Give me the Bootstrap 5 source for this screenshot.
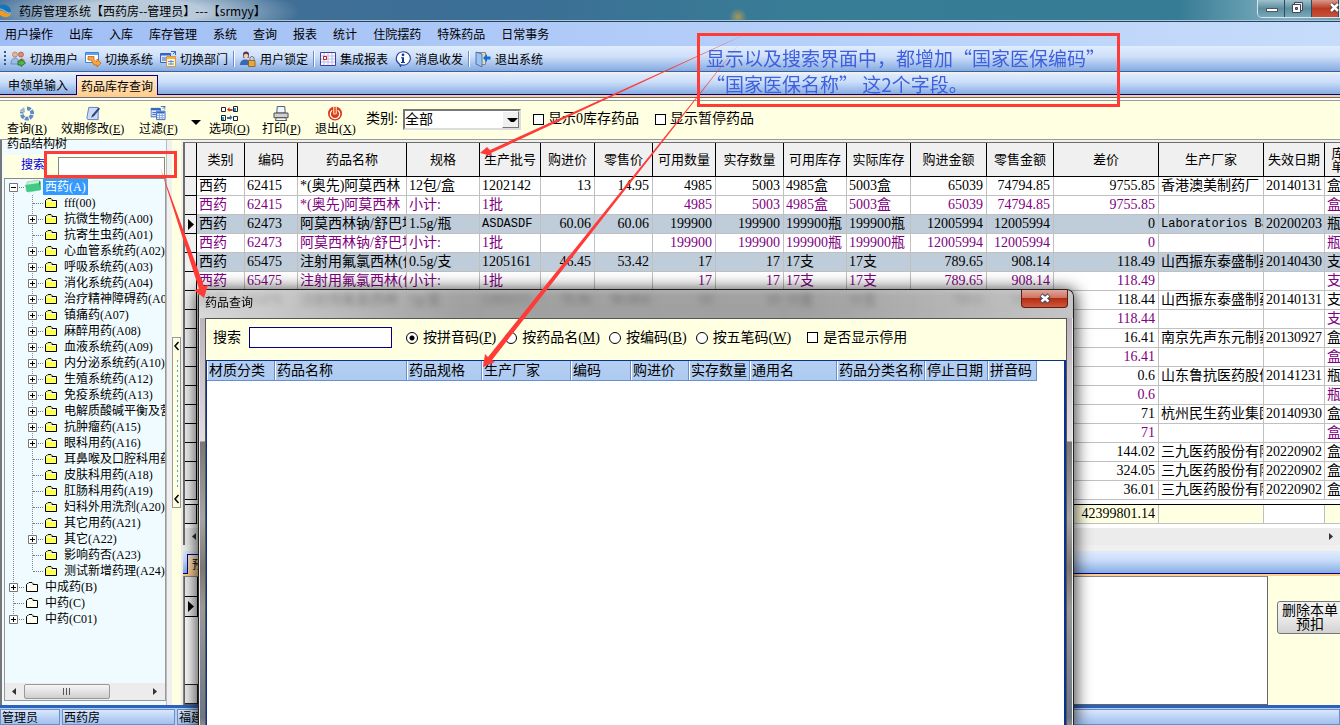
<!DOCTYPE html>
<html lang="zh-CN">
<head>
<meta charset="utf-8">
<meta name="viewport" content="width=device-width, initial-scale=1">
<title>药房管理系统</title>
<link href="https://cdn.jsdelivr.net/npm/bootstrap@5.3.0/dist/css/bootstrap.min.css" rel="stylesheet">
<style>
:root{--cream:#ffffe1;--azure:#f0fbff;--bar:linear-gradient(#e0edfd,#cfe0f9 40%,#86abe2)}
body{font-family:"Liberation Serif","Noto Sans CJK SC",sans-serif;font-size:12px;line-height:16px;color:#000;background:#f0f0f0;overflow:hidden}
button,input,select{font:inherit;color:inherit;border-radius:0}
button{background:none;border:0;padding:0}
a{color:#000;text-decoration:none}
svg{display:block;flex:none}
.ui-sans{font-family:"Noto Sans CJK SC",sans-serif}
.fs14{font-size:14px}
/* window chrome */
.titlebar{height:22px;background:radial-gradient(circle at 738px 17px,#a5995a 0,transparent 9px),radial-gradient(ellipse 160px 30px at 140px 12px,#b9cadb 40%,transparent 100%),linear-gradient(90deg,#456f98,#3b6f95 40%,#387d96 60%,#377c95 88%,#7fb0c0 96%,#6d9cae);border-bottom:1px solid #27425a;box-shadow:inset 0 -1px #a9c9dd}
.titletext{padding:3px 0 0 6px}
.winctl{height:18px;border:1px solid #d5e6ee;border-top:0;border-radius:0 0 0 5px;overflow:hidden}
.winctl button{height:17px;width:27px;background:linear-gradient(#9fc0cc,#5d8d9e 50%,#79a9b8);border-right:1px solid #2c4c5c}
.winctl .close-main{background:linear-gradient(#d99a8c,#b83a22 50%,#c9513a)}
.menubar{height:24px;background:linear-gradient(90deg,#a0bef5,#b4cef8 55%,#c6dcfa);padding-left:5px;gap:16px}
.cmdbar{height:26px;background:var(--bar);border-bottom:1px solid #3b619c;padding-left:4px}
.cmdbar button{gap:4px}
.grp{gap:7px}
.vsep{width:2px;height:16px;margin:0 5px;background:linear-gradient(90deg,#6c8fc8 50%,#fff 50%)}
.grip{width:2px;height:15px;margin-right:4px;background:repeating-linear-gradient(#35558c 0 2px,transparent 2px 4px)}
.tabstrip{height:21px;margin-top:2px;background:linear-gradient(#deebfd,#cbdef9 40%,#87ade4);border-bottom:1px solid #00008b}
.tabstrip.lower{height:23px;margin-top:6px;padding-left:4px}
.tabstrip button{height:18px;padding:0 8px;line-height:18px}
.tabstrip button.on{background:linear-gradient(#ffe9cb,#ffd093);border:1px solid #00008b;border-bottom:0;height:20px;margin-bottom:-1px;padding:0 4px}
.rim{height:2px;background:#ffce8e}
/* tool panel */
.toolpane{background:var(--cream);height:43px;border-top:1px solid #6d6d6d;border-bottom:1px solid #9a9a9a;box-shadow:inset 0 2px #fff,inset 0 3px #999;padding:5px 0 0 7px}
.tools{display:grid;grid-template-columns:54px 78px 52px 18px 53px 53px 51px}
.tools button{justify-self:start;display:flex;flex-direction:column;align-items:center;gap:1px;padding-top:3px;white-space:nowrap;line-height:14px}
.kindlabel{width:37px;white-space:nowrap}
.combo{position:relative;width:118px;height:21px;margin-right:12px}
.combo select{appearance:none;width:100%;height:100%;border:2px solid;border-color:#777 #ddd #ddd #777;background:#fff;padding:0;line-height:17px}
.combo span{position:absolute;right:2px;top:2px;width:17px;height:17px;background:#f0f0f0;border:1px solid;border-color:#fff #777 #777 #fff;pointer-events:none}
.combo span::after,.drop::after{content:"";display:block;border:4px solid transparent;border-top-color:#000;border-bottom:0;margin:6px 0 0 4px}
.drop::after{border-width:5px 5px 0;margin:14px 0 0}
.tick{appearance:none;width:11px;height:11px;margin:0;border:1px solid #000;background:#fff}
.dot{appearance:none;width:12px;height:12px;margin:0;border:1px solid #000;border-radius:50%;background:#fff}
.dot:checked{background:radial-gradient(#000 0 2px,#fff 3px)}
/* left tree */
.leftpane{width:183px;border-left:2px solid #777;background:linear-gradient(90deg,#fff 1px,#f0f0f0 2px)}
.treewrap{width:165px;padding-left:2px;border-right:1px solid #bbb;background:var(--azure)}
.legend12{height:15px;padding-left:3px;line-height:9px}
.find{height:23px;background:var(--cream);padding:2px 0 0 17px;gap:13px}
.find label{color:#0000e8;width:24px}
.find input{width:107px;height:19px;border:1px solid #888;background:#fff}
.treebox{width:162px;border:1px solid #999;border-top-color:#888;background:var(--azure);overflow:hidden}
.tree{list-style:none;margin:0;padding:0}
.tree li{display:flex;height:16px;white-space:nowrap;line-height:16px}
.cellv{position:relative;flex:none;width:19px;height:16px;background:repeating-linear-gradient(#888 0 1px,transparent 1px 2px) 8px 0/1px 100% no-repeat}
.cellv.h::after{content:"";position:absolute;left:9px;right:0;top:8px;border-top:1px dotted #777}
.cellv.half{background-size:1px 8px}
.cellv.low{background-position:8px 8px;background-size:1px 8px}
.cellv svg{position:absolute;left:4px;top:4px;z-index:1}
.fold{width:21px;flex:none;padding:3px 0 0 2px}
.fold.open{padding:1px 0 0}
.picked{background:#39f;color:#fff;margin-left:-2px;padding:0 2px}
.hscroll{height:17px;background:#ececec}
.thumb{width:86px;height:15px;border:1px solid #999;border-radius:2px;background:linear-gradient(#f5f5f5,#e3e3e3 50%,#cfcfcf)}
.gutter{width:9px;margin-left:5px;background:var(--cream)}
.splitter{margin-top:197px;height:171px;border:1px solid #999;background:repeating-linear-gradient(#5b9be8 0 2px,transparent 2px 5px) 4px 22px/1px 128px no-repeat #ffffe1;padding:2px 0}
/* stock grid */
.gridbox{border:1px solid #6d6d6d;border-left-width:2px;border-bottom:0;border-right:0;margin-top:2px;background:#fff;overflow:hidden}
.stock{table-layout:fixed;width:1148px;border-collapse:separate;border-spacing:0;font-size:14px}
.stock th,.stock td{padding:0 3px 0 2px;border-right:1px solid #c0c0c0;border-bottom:1px solid #c0c0c0;height:19px;line-height:18px;white-space:nowrap;overflow:hidden;font-weight:400}
.stock thead th{height:34px;background:#f0f0f0;border-color:#000;font-size:13px;line-height:13px;text-align:center;padding:0}
.stock thead th:last-child{white-space:normal;padding:0 6px}
.stock tbody th,.stock tfoot tr:last-child th{background:#f0f0f0;border-color:#000;padding:0}
.stock .num{text-align:right}
.stock .mono{font-family:"Liberation Mono",monospace;font-size:12px}
.stock .sub td{color:purple}
.stock .hot td{background:#bfccd9}
.stock tfoot td{background:var(--cream)}
.stock tfoot .gap td{height:5px;background:#fff;border-color:#000;border-right:0}
/* lower pane */
.detail{border-left:1px solid #888;overflow:hidden}
.detailbox{width:1084px;background:#fff;border:1px solid #666;border-top-color:#888}
.rowcell{width:13px;height:20px;background:#f0f0f0;border:solid #000;border-width:0 1px 1px 0}
.sidepane{background:var(--cream)}
.bigbtn{width:66px;height:33px;margin:25px 0 0 9px;border:1px solid #777;border-radius:3px;background:linear-gradient(#f3f3f3,#ebebeb 50%,#d2d2d2);font-size:14px;line-height:14px;flex:none}
.statusbar{height:20px;border-top:3px solid #2c62bb;background:#b4cff5;gap:2px;padding-top:1px}
.statusbar>div{border:1px solid #6d8fc6;background:linear-gradient(#d9e7fc,#9fc0f0);line-height:16px;padding:0 1px;white-space:nowrap;overflow:hidden}
.statusbar .who{width:60px}
.statusbar .dept{width:113px}
/* search window lies over the main window */
.dlg{position:absolute;left:198px;top:289px;bottom:0;width:876px;border:1px solid #222;border-bottom:0;border-radius:7px 7px 0 0;background:linear-gradient(#dcdcdc44,transparent 6px),linear-gradient(90deg,#cfcfcfcc,#8a8a8acc 30%,#8a8a8acc 70%,#bdbdbddd);backdrop-filter:blur(3px);box-shadow:0 2px 16px 2px rgba(0,0,0,.75);padding:0 6px}
.dlg::before{content:"";position:absolute;inset:28px 0 0;background:linear-gradient(#bdb4bd,#e0dce0 123px,#777 124px,#a5a5a5 200px,#7b7672 250px,#999 290px,#6b7686 400px,#8d8d8d);box-shadow:inset 1px 0 #e8e8e8,inset -1px 0 #eee}
.dlghead{height:28px;padding-top:4px}
.dlghead button{position:absolute;right:5px;top:0;width:47px;height:18px;border:1px solid #5a2018;border-top:0;border-radius:0 0 4px 4px;background:linear-gradient(#dfa79b,#cf7562 45%,#b32c12 50%,#d0583c)}
.client{position:relative;height:calc(100% - 28px);background:#fff;border:1px solid #555;border-bottom:0}
.dlgsearch{height:41px;background:var(--cream);padding:0 0 4px 7px;font-size:14px}
.dlgsearch .box{width:143px;height:21px;border:1px solid #00008b;background:#fff;margin:0 14px 0 8px}
.dlgsearch label{white-space:nowrap;gap:5px}
.radios{gap:9px}
.results{border:1px solid #0a318e;border-width:1px 2px 0 1px;background:#fff}
.results table{table-layout:fixed;width:830px;font-size:14px;border-collapse:separate;border-spacing:0}
.results th{height:20px;line-height:18px;padding:0 0 0 2px;font-weight:400;white-space:nowrap;overflow:hidden;background:linear-gradient(#b5cff2,#adcaf0);border-right:1px solid #6a8fce;border-bottom:1px solid #6a8fce;box-shadow:inset 1px 0 #fff}
/* review notes */
.overlay{position:absolute;left:0;top:0;pointer-events:none}
.note{position:absolute;left:697px;top:33px;width:423px;height:74px;border:3px solid #ff3b38;padding:9px 0 0 6px;font:19px/26px "Noto Sans CJK SC",sans-serif;color:#3f5fdd;white-space:nowrap}
.ringed{position:absolute;left:44px;top:151px;width:133px;height:27px;border:3px solid #ff3b38;pointer-events:none}
</style>
</head>
<body class="vh-100 d-flex flex-column position-relative">
<svg width="0" height="0" class="position-absolute" aria-hidden="true">
  <symbol id="folder" viewBox="0 0 12 10"><path d="M.5 9.500V2.500L1.500 1.500H2L3 .5H6L7 1.500V2.500H11.500V9.500Z" fill="#ffff50" stroke="#000"/><path d="M1.500 3.500H11" stroke="#fff"/></symbol>
  <symbol id="folderw" viewBox="0 0 12 10"><path d="M.5 9.500V2.500L1.500 1.500H2L3 .5H6L7 1.500V2.500H11.500V9.500Z" fill="#fffff0" stroke="#000"/></symbol>
  <symbol id="plus" viewBox="0 0 9 9"><path d="M.5.5h8v8h-8z" fill="#fff" stroke="#777"/><path d="M2 4.500h5M4.500 2v5" stroke="#000"/></symbol>
  <symbol id="minus" viewBox="0 0 9 9"><path d="M.5.5h8v8h-8z" fill="#fff" stroke="#777"/><path d="M2 4.500h5" stroke="#000"/></symbol>
  <symbol id="sheets" viewBox="0 0 16 16"><path d="M.5 2.500h10v9H.5z" fill="#dce9ff" stroke="#3d62ad"/><path d="M.5 2.500h10v2H.5z" fill="#3564c4"/><path d="M2 7h4M2 9h4" stroke="#3564c4"/><path d="M11 .500h4.500V4M13 3l2.500-2.500" stroke="#3564c4" fill="none"/></symbol>
</svg>

<header class="flex-shrink-0">
  <div class="titlebar d-flex align-items-start ui-sans">
    <svg width="13" height="16" viewBox="0 0 13 16" class="mt-1"><path d="M0 1C5-1 11 2 11 8 8 10 5 5 0 5Z" fill="#1673b9"/><path d="M0 7C4 6 6 11 11 10 9 14 4 14 0 11Z" fill="#f79a1c"/><path d="M0 5C4 5 7 10 11 9" stroke="#7fd0f5" fill="none"/></svg>
    <span class="titletext">药房管理系统【西药房--管理员】---【srmyy】</span>
    <div class="winctl d-flex ms-auto">
      <button aria-label="最小化"><svg width="27" height="17"><rect x="8.500" y="8.500" width="11" height="3" fill="#fff" stroke="#475a66"/></svg></button>
      <button aria-label="还原"><svg width="27" height="17"><path d="M9.500 2.500h8v8h-8z" fill="#eee" stroke="#445" /><path d="M7.500 4.500h8v8h-8z" fill="#fff" stroke="#445"/><path d="M10.500 7.500h2v2h-2z" fill="#5d8d9e" stroke="#445"/></svg></button>
      <button aria-label="关闭" class="close-main"><svg width="27" height="17"><path d="M19 4l7 7M26 4l-7 7" stroke="#533" stroke-width="4"/><path d="M19 4l7 7M26 4l-7 7" stroke="#fff" stroke-width="2.500"/></svg></button>
    </div>
  </div>
  <nav class="menubar d-flex align-items-center ui-sans">
    <a href="#">用户操作</a><a href="#">出库</a><a href="#">入库</a><a href="#">库存管理</a><a href="#">系统</a><a href="#">查询</a><a href="#">报表</a><a href="#">统计</a><a href="#">住院摆药</a><a href="#">特殊药品</a><a href="#">日常事务</a>
  </nav>
  <div class="cmdbar d-flex align-items-center ui-sans">
    <span class="grip"></span>
    <div class="grp d-flex">
      <button class="d-flex"><svg width="16" height="16" viewBox="0 0 16 16"><circle cx="5" cy="3.500" r="2.500" fill="#f3b28c" stroke="#8a6a55" stroke-width=".6"/><circle cx="11" cy="3.500" r="2.500" fill="#e58a6a" stroke="#8a4a35" stroke-width=".6"/><path d="M8 13c0-6 7-8 7-1" fill="#e8735a"/><path d="M1 13c0-8 8-8 8 0Z" fill="#9bbde8" stroke="#5377a8" stroke-width=".7"/><path d="M8 10h3V8l4.500 4L11 15.500V14H8Z" fill="#4cb848" stroke="#176a1b" stroke-width=".8"/></svg>切换用户</button>
      <button class="d-flex"><svg width="16" height="16" viewBox="0 0 16 16"><path d="M.5 1.500h13v10H.5z" fill="#fff" stroke="#3f87d6"/><path d="M1 2h12v2H1z" fill="#5aa2ea"/><path d="M3 5.500h6v3l2 2h1V8l4 4-4 4v-2h-3l-3-5H3z" fill="#fba63a" stroke="#c5620d" stroke-width=".8"/></svg>切换系统</button>
      <button class="d-flex"><svg width="16" height="16" viewBox="0 0 16 16"><use href="#sheets"/><path d="M6.500 5.500h9v10h-9z" fill="#fff3d0" stroke="#d69a3c"/><path d="M7 6h8v2H7z" fill="#f3b14a"/><path d="M8 10.500h6M8 13h6M11 9v5" stroke="#5b8de0"/></svg>切换部门</button>
    </div>
    <span class="vsep"></span>
    <button class="d-flex"><svg width="16" height="16" viewBox="0 0 16 16"><path d="M3 3C3-.5 9-.5 9 3l-.5 4h-5z" fill="#58304f"/><circle cx="6" cy="5" r="2.200" fill="#f6cdb0"/><path d="M0 14c0-7 10-7 11-1v1z" fill="#3767b5"/><path d="M8.500 9.500h6.500v6H8.500z" fill="#e9a83c" stroke="#8a5a14" stroke-width=".8"/><path d="M10 9V7.500a2 2 0 0 1 4 0V9" fill="none" stroke="#777"/></svg>用户锁定</button>
    <span class="vsep"></span>
    <div class="grp d-flex">
      <button class="d-flex"><svg width="16" height="16" viewBox="0 0 16 16"><path d="M.5 1.500h15v13H.5z" fill="#fff" stroke="#40409c"/><path d="M4 2v12M8 2v12M12 2v12M1 5h14M1 8h14M1 11h14" stroke="#b9b9ec"/><path d="M3.500 5.500h3v3h-3z" fill="#fff" stroke="#c21c1c"/></svg>集成报表</button>
      <button class="d-flex"><svg width="16" height="16" viewBox="0 0 16 16"><path d="M8 .7a7 6.700 0 1 1-2 13L5.500 15.500 4.500 13A7 6.700 0 0 1 8 .7z" fill="#fff" stroke="#1c3c9c" stroke-width="1.100"/><circle cx="8" cy="3.800" r="1.400" fill="#123a9a"/><path d="M6 6.300h3V11h1v1H6v-1h1V7.300H6z" fill="#123a9a"/></svg>消息收发</button>
    </div>
    <span class="vsep"></span>
    <button class="d-flex"><svg width="16" height="16" viewBox="0 0 16 16"><path d="M1.500 1.500h9v12h-9z" fill="#d8dcc0" stroke="#888"/><path d="M1 1l6 2v13l-6-3z" fill="#9dc4ef" stroke="#3a62a8" stroke-width=".8"/><path d="M15.500 5.500H12V3L8 7l4 4V8.500h3.500z" fill="#156bd6"/></svg>退出系统</button>
  </div>
  <div class="tabstrip d-flex align-items-end ui-sans">
    <button>申领单输入</button><button class="on">药品库存查询</button>
  </div>
  <div class="rim"></div>
  <div class="toolpane d-flex">
    <div class="tools">
      <button><svg width="16" height="15" viewBox="0 0 16 16"><path d="M8 2.500a5.500 5.500 0 1 1-5.200 3.700" fill="none" stroke="#5f8cc9" stroke-width="4" stroke-dasharray="4 1"/><path d="M0 5l5-4 1 6z" fill="#9cb2d6"/></svg><span>查询(<u>R</u>)</span></button>
      <button><svg width="16" height="15" viewBox="0 0 16 16"><path d="M3.500 1.500h10v13H2.500l-1-2z" fill="#cbdcf8" stroke="#5b7bc0"/><path d="M14 1.500l1.500 1.500L9 11l-3 1.500L7 9.500z" fill="#32477d"/></svg><span>效期修改(<u>E</u>)</span></button>
      <button><svg width="16" height="15" viewBox="0 0 16 16"><use href="#sheets"/><path d="M6.500 5.500h9v9h-9z" fill="#fff" stroke="#3564c4"/><path d="M7 7h8" stroke="#3564c4" stroke-width="2"/><path d="M7 10h8M7 12.500h8M9.500 8v6M12.500 8v6" stroke="#7f9fdc"/></svg><span>过滤(<u>F</u>)</span></button>
      <button class="drop" aria-label="更多过滤"></button>
      <button><svg width="17" height="15" viewBox="0 0 17 15"><g fill="#fff" stroke="#223"><path d="M.5 1.500h4v4h-4zM12.500 .5h4v5h-4zM.5 9.500h4v5h-4zM12.500 10.500h4v4h-4z"/></g><path d="M14 2v3M2 11v3" stroke="#29c" stroke-width="2"/><path d="M6 3.500l2.500-2.500v2h3v2h-3v1z" fill="#c0392b"/><path d="M11.500 11.500L9 9v2H6v2h3v1z" fill="#2468b8"/></svg><span>选项(<u>O</u>)</span></button>
      <button><svg width="16" height="15" viewBox="0 0 16 16"><path d="M3.500 7.500l.5-7h8l.5 7z" fill="#eef5ff" stroke="#456"/><path d="M.5 7.500h15v5h-15z" fill="#cfcfcf" stroke="#444"/><path d="M3 12.500h10l1 3H2z" fill="#f4f4f4" stroke="#444"/></svg><span>打印(<u>P</u>)</span></button>
      <button><svg width="16" height="15" viewBox="0 0 16 16"><circle cx="8" cy="8" r="7.500" fill="#dc3a14"/><path d="M5 4.500a5 5 0 1 0 6 0" fill="none" stroke="#fff" stroke-width="1.300"/><path d="M6.500.5h3v8h-3z" fill="#e8682c" stroke="#fff" stroke-width=".8"/></svg><span>退出(<u>X</u>)</span></button>
    </div>
    <div class="d-flex align-items-center fs14 pb-1">
      <label for="kind" class="kindlabel">类别:</label>
      <div class="combo"><select id="kind"><option>全部</option></select><span></span></div>
      <label class="d-flex align-items-center gap-1"><input type="checkbox" class="tick">显示0库存药品</label>
      <label class="d-flex align-items-center gap-1 ps-3"><input type="checkbox" class="tick">显示暂停药品</label>
    </div>
  </div>
</header>

<main class="d-flex flex-fill" style="min-height:0">
  <aside class="leftpane d-flex flex-shrink-0">
    <div class="treewrap d-flex flex-column flex-shrink-0">
      <div class="legend12">药品结构树</div>
      <div class="find d-flex align-items-start"><label for="tq">搜索</label><input id="tq" type="text"></div>
      <div class="treebox d-flex flex-column flex-fill mb-1">
        <ul class="tree flex-fill" id="tree"></ul>
        <div class="hscroll d-flex align-items-center">
          <svg width="19" height="15"><path d="M11 4v7L7 7.500z" fill="#333"/></svg>
          <div class="thumb"><svg width="84" height="13"><path d="M38.500 3v7M41.500 3v7M44.500 3v7" stroke="#555"/></svg></div>
          <svg width="19" height="15" class="ms-auto"><path d="M7 4v7l4-3.500z" fill="#333"/></svg>
        </div>
      </div>
    </div>
    <div class="gutter"><div class="splitter d-flex flex-column justify-content-between">
      <svg width="7" height="12"><path d="M5.500 2L2 6l3.500 4" stroke="#000" stroke-width="1.500" fill="none"/></svg>
      <svg width="7" height="12"><path d="M5.500 2L2 6l3.500 4" stroke="#000" stroke-width="1.500" fill="none"/></svg>
    </div></div>
  </aside>

  <section class="d-flex flex-column flex-fill" style="min-width:0">
    <div class="gridbox flex-shrink-0">
      <table class="stock">
        <colgroup id="cols"></colgroup>
        <thead><tr id="heads"></tr></thead>
        <tbody id="rows"></tbody>
        <tfoot>
          <tr class="gap"><td colspan="18"></td></tr>
          <tr><th></th><td colspan="13"></td><td class="num">42399801.14</td><td></td><td class="bg-white"></td><td></td></tr>
        </tfoot>
      </table>
      <div class="hscroll d-flex align-items-center mt-1">
        <svg width="17" height="15"><path d="M11 4v7L7 7.500z" fill="#333"/></svg>
        <svg width="17" height="15" class="ms-auto"><path d="M6 4v7l4-3.500z" fill="#333"/></svg>
      </div>
    </div>
    <div class="tabstrip lower flex-shrink-0 d-flex align-items-end"><button class="on">预扣</button></div>
    <div class="rim flex-shrink-0"></div>
    <div class="detail d-flex flex-fill">
      <div class="detailbox flex-shrink-0 d-flex flex-column">
        <div class="rowcell"></div>
        <div class="rowcell"><svg width="12" height="18"><path d="M3 4v11l6-5.500z"/></svg></div>
        <div class="rowcell mt-auto border-top border-dark"></div>
      </div>
      <div class="sidepane d-flex flex-fill align-items-start"><button class="bigbtn">删除本单<br>预扣</button></div>
    </div>
  </section>
</main>

<footer class="statusbar d-flex flex-shrink-0">
  <div class="who">管理员</div><div class="dept">西药房</div><div class="flex-fill">福建</div>
</footer>

<div class="dlg" role="dialog" aria-labelledby="dlgt">
  <div class="dlghead ui-sans"><span id="dlgt">药品查询</span>
    <button aria-label="关闭"><svg width="45" height="17"><path d="M19 5l8 7M27 5l-8 7" stroke="#434a5c" stroke-width="4.500"/><path d="M19.500 5.500l7 6M26.500 5.500l-7 6" stroke="#fff" stroke-width="2.500"/></svg></button>
  </div>
  <div class="client d-flex flex-column">
    <div class="dlgsearch d-flex align-items-center flex-shrink-0">
      <label for="dq">搜索</label><input id="dq" type="text" class="box">
      <div class="radios d-flex">
        <label class="d-flex align-items-center"><input type="radio" name="by" class="dot" checked><span>按拼音码(<u>P</u>)</span></label>
        <label class="d-flex align-items-center"><input type="radio" name="by" class="dot"><span>按药品名(<u>M</u>)</span></label>
        <label class="d-flex align-items-center"><input type="radio" name="by" class="dot"><span>按编码(<u>B</u>)</span></label>
        <label class="d-flex align-items-center"><input type="radio" name="by" class="dot"><span>按五笔码(<u>W</u>)</span></label>
      </div>
      <label class="d-flex align-items-center ms-3"><input type="checkbox" class="tick">是否显示停用</label>
    </div>
    <div class="results flex-fill">
      <table>
        <colgroup id="rcols"></colgroup>
        <thead><tr id="rheads"></tr></thead>
      </table>
    </div>
  </div>
</div>

<div class="ringed"></div>
<svg class="overlay" width="800" height="400" fill="#ff3b38">
  <path d="M748 33L490 150 487 147 480 153 492 156 491 153Z"/>
  <path d="M740 43L488 357 485 354 483 367 495 362 492 360Z"/>
  <path d="M160 167L199 289 194 290 204 298 208 285 204 286Z"/>
</svg>
<div class="note">显示以及搜索界面中，都增加“国家医保编码”<br>“国家医保名称” 这2个字段。</div>

<script>
const use = (id, w, h) => `<svg width="${w}" height="${h}"><use href="#${id}"/></svg>`;
/* tree: [has children, label] */
const kids = [[0,'fff(00)'],[1,'抗微生物药(A00)'],[0,'抗寄生虫药(A01)'],[1,'心血管系统药(A02)'],[1,'呼吸系统药(A03)'],[1,'消化系统药(A04)'],[1,'治疗精神障碍药(A06)'],[1,'镇痛药(A07)'],[1,'麻醉用药(A08)'],[1,'血液系统药(A09)'],[1,'内分泌系统药(A10)'],[1,'生殖系统药(A12)'],[1,'免疫系统药(A13)'],[1,'电解质酸碱平衡及营'],[1,'抗肿瘤药(A15)'],[1,'眼科用药(A16)'],[0,'耳鼻喉及口腔科用药'],[0,'皮肤科用药(A18)'],[0,'肛肠科用药(A19)'],[0,'妇科外用洗剂(A20)'],[0,'其它用药(A21)'],[1,'其它(A22)'],[0,'影响药否(A23)'],[0,'测试新增药理(A24)']];
const roots = [[1,'中成药(B)'],[0,'中药(C)'],[1,'中药(C01)']];
document.getElementById('tree').innerHTML =
  `<li><span class="cellv h low">${use('minus',9,9)}</span><span class="fold open"><svg width="18" height="13" viewBox="0 0 18 13"><path d="M3 2l11-2 2 1v9l-11 2-3-1z" fill="#c9f0d4" stroke="#8cc6a0" stroke-width=".6"/><path d="M1 5l14-2 2 7-14 2z" fill="#3fcb86"/><path d="M15 1l1.500.5v8l-1.500-6z" fill="#0c9a4c"/></svg></span><span class="picked">西药(A)</span></li>` +
  kids.map(([k, t], i) => `<li><span class="cellv"></span><span class="cellv h ${i === kids.length - 1 ? 'half' : ''}">${k ? use('plus',9,9) : ''}</span><span class="fold">${use('folder',12,10)}</span><span>${t}</span></li>`).join('') +
  roots.map(([k, t], i) => `<li><span class="cellv h ${i === 2 ? 'half' : ''}">${k ? use('plus',9,9) : ''}</span><span class="fold">${use('folderw',12,10)}</span><span>${t}</span></li>`).join('');

/* stock grid: [title, width, right aligned] */
const cols = [['',12],['类别',48],['编码',53],['药品名称',109],['规格',73],['生产批号',61],['购进价',54,1],['零售价',58,1],['可用数量',63,1],['实存数量',68,1],['可用库存',63],['实际库存',64],['购进金额',76,1],['零售金额',67,1],['差价',105,1],['生产厂家',105],['失效日期',61],['库存单位',40]];
document.getElementById('cols').innerHTML = cols.map(c => `<col style="width:${c[1]}px">`).join('');
document.getElementById('heads').innerHTML = cols.map(c => `<th>${c[0]}</th>`).join('');
const blank = Array(13).fill('').join('|');
const data = [
 ['','西药|62415|*(奥先)阿莫西林|12包/盒|1202142|13|14.95|4985|5003|4985盒|5003盒|65039|74794.85|9755.85|香港澳美制药厂|20140131|盒'],
 ['sub','西药|62415|*(奥先)阿莫西林|小计:|1批|||4985|5003|4985盒|5003盒|65039|74794.85|9755.85|||盒'],
 ['hot','西药|62473|阿莫西林钠/舒巴坦|1.5g/瓶|ASDASDF|60.06|60.06|199900|199900|199900瓶|199900瓶|12005994|12005994|0|Laboratorios Ba|20200203|瓶'],
 ['sub','西药|62473|阿莫西林钠/舒巴坦|小计:|1批|||199900|199900|199900瓶|199900瓶|12005994|12005994|0|||瓶'],
 ['hot','西药|65475|注射用氟氯西林(仙|0.5g/支|1205161|46.45|53.42|17|17|17支|17支|789.65|908.14|118.49|山西振东泰盛制药|20140430|支'],
 ['sub','西药|65475|注射用氟氯西林(仙|小计:|1批|||17|17|17支|17支|789.65|908.14|118.49|||支'],
 ['','西药|65476|注射用氟氯西林|1g/支|1203115|78.96|90.804|10|10|10支|10支|789.6|908.04|118.44|山西振东泰盛制药|20140131|支'],
 ['sub',blank+'|118.44|||支'],
 ['',blank+'|16.41|南京先声东元制药|20130927|盒'],
 ['sub',blank+'|16.41|||盒'],
 ['',blank+'|0.6|山东鲁抗医药股份|20141231|瓶'],
 ['sub',blank+'|0.6|||瓶'],
 ['',blank+'|71|杭州民生药业集团|20140930|盒'],
 ['sub',blank+'|71|||盒'],
 ['',blank+'|144.02|三九医药股份有限|20220902|盒'],
 ['',blank+'|324.05|三九医药股份有限|20220902|盒'],
 ['',blank+'|36.01|三九医药股份有限|20220902|盒']];
document.getElementById('rows').innerHTML = data.map(([cls, r], n) => `<tr class="${cls}"><th>${n === 2 ? '<svg width="11" height="14"><path d="M3 2v11l6-5.500z"/></svg>' : ''}</th>` +
  r.split('|').map((t, i) => `<td class="${cols[i + 1][2] ? 'num' : ''} ${/^[A-Z][A-Za-z ]+$/.test(t) ? 'mono' : ''}">${t}</td>`).join('') + '</tr>').join('');

/* search results header */
const res = [['材质分类',68],['药品名称',132],['药品规格',75],['生产厂家',89],['编码',60],['购进价',58],['实存数量',61],['通用名',87],['药品分类名称',88],['停止日期',63],['拼音码',49]];
document.getElementById('rcols').innerHTML = res.map(c => `<col style="width:${c[1]}px">`).join('');
document.getElementById('rheads').innerHTML = res.map(c => `<th>${c[0]}</th>`).join('');
</script>
<script src="https://cdn.jsdelivr.net/npm/bootstrap@5.3.0/dist/js/bootstrap.bundle.min.js"></script>
</body>
</html>
